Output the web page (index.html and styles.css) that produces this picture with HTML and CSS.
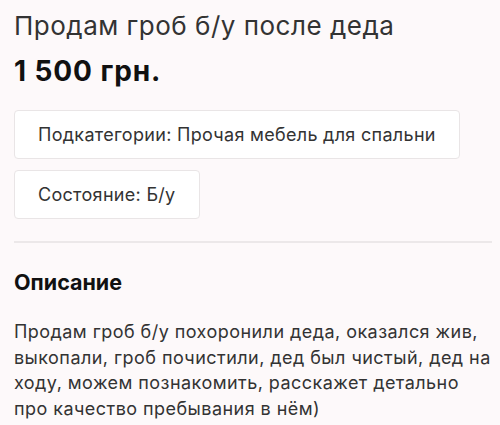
FILE: index.html
```html
<!DOCTYPE html>
<html lang="ru">
<head>
  <meta charset="UTF-8">
  <meta name="viewport" content="width=device-width, initial-scale=1.0">
  <title>Продам гроб б/у после деда</title>
  <link rel="stylesheet" href="styles.css">
</head>
<body>
  <!-- Ad header -->
  <div class="ad-head">
    <h1 class="ad-title">Продам гроб б/у после деда</h1>
    <div class="ad-price">1 500 грн.</div>
  </div>

  <!-- Params -->
  <ul class="params">
    <li class="param">Подкатегории: Прочая мебель для спальни</li>
    <li class="param">Состояние: Б/у</li>
  </ul>

  <!-- Description -->
  <div class="description">
    <h2>Описание</h2>
    <p>Продам гроб б/у похоронили деда, оказался жив, выкопали, гроб почистили, дед был чистый, дед на ходу, можем познакомить, расскажет детально про качество пребывания в нём)</p>
  </div>
</body>
</html>
```

FILE: styles.css
```css
body {
  margin: 0;
  padding: 0 8px 0 14px;
  background-color: #fdf9fa;
  color: #2e2e2e;
  font-family: Inter, "Noto Sans", sans-serif;
}
.ad-head {
  padding-top: 10px;
}
.ad-title {
  margin: 0;
  font-size: 26px;
  font-weight: 400;
  letter-spacing: 0.5px;
  line-height: 32px;
  color: #333;
}
.ad-price {
  margin-top: 12px;
  font-size: 28px;
  font-weight: 700;
  letter-spacing: 0.9px;
  line-height: 34px;
  color: #111;
}
.params {
  list-style: none;
  margin: 22px 0 0;
  padding: 0;
  display: flex;
  flex-direction: column;
  align-items: flex-start;
  gap: 11px;
}
.param {
  padding: 13px 23px;
  font-size: 18px;
  letter-spacing: 0.3px;
  line-height: 21px;
  color: #333;
  background-color: #fff;
  border: 1px solid #e9e5e6;
  border-radius: 4px;
}
.description {
  margin-top: 22px;
  border-top: 2px solid #ece8e9;
}
.description h2 {
  margin: 26px 0 0;
  font-size: 21.5px;
  font-weight: 700;
  line-height: 26px;
  color: #111;
}
.description p {
  margin: 24px 0 0;
  font-size: 18px;
  letter-spacing: 0.45px;
  line-height: 25.5px;
  color: #333;
}
```
